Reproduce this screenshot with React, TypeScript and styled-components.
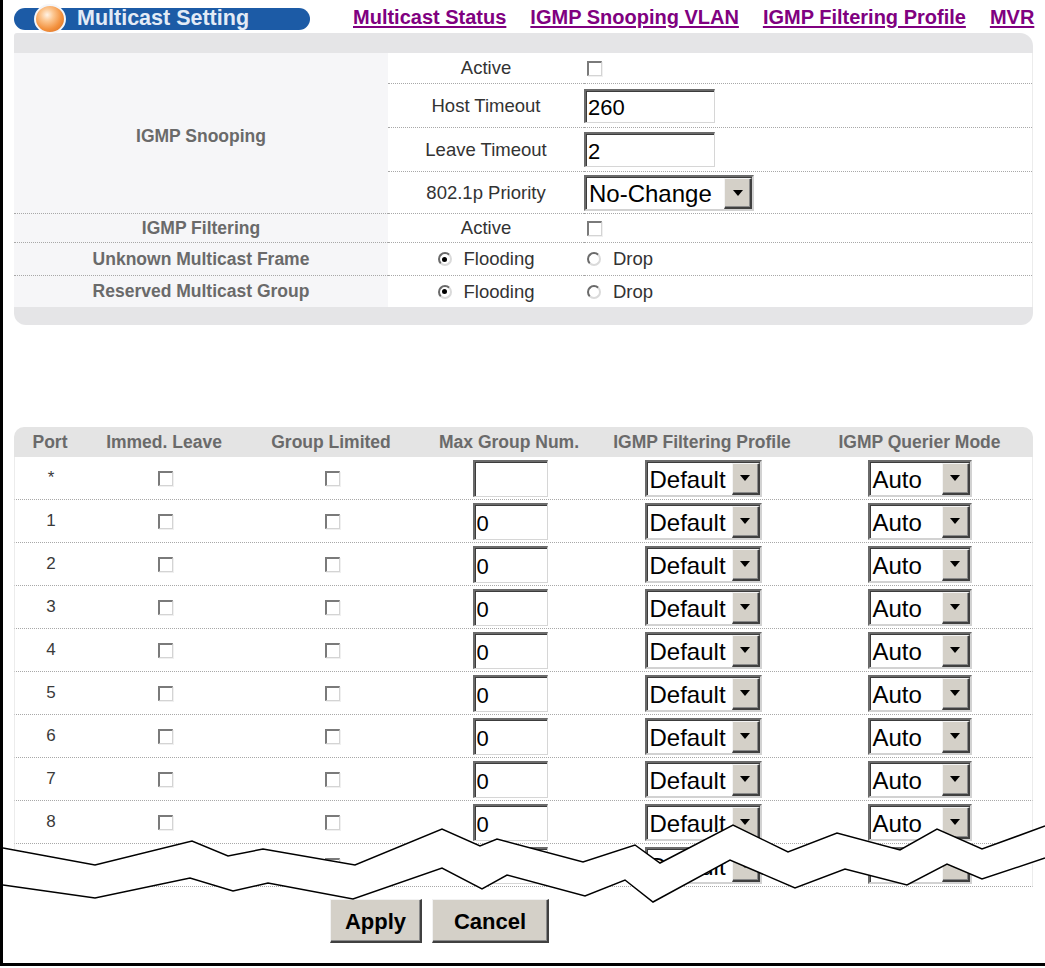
import React from "react";
import styled, { createGlobalStyle } from "styled-components";

const GlobalStyle = createGlobalStyle`
  *, *::before, *::after { box-sizing: border-box; }
  html, body { margin: 0; padding: 0; background: #ffffff; }
  body { font-family: "Liberation Sans", Arial, Helvetica, sans-serif; }
`;

const DOT = "#a8a8a8";
const BAND = "#e5e5e7";
const LABEL = "#6a6a6a";

const Frame = styled.div`
  position: relative;
  width: 1045px;
  height: 966px;
  border-left: 3px solid #000;
  border-bottom: 3px solid #000;
  padding: 8px 0 0 11px;
  overflow: hidden;
  background: #fff;
`;

const TopBar = styled.header`
  display: flex;
  align-items: center;
  height: 22px;
`;

const TitlePill = styled.div`
  display: flex;
  align-items: center;
  flex: none;
  width: 296px;
  height: 22px;
  border-radius: 11px;
  background: #1c5ba6;
  padding-left: 20px;
`;

const Orb = styled.span`
  flex: none;
  width: 32px;
  height: 30px;
  margin: -4px 0;
  border-radius: 50%;
  border: 2px solid #f4f6fa;
  background: radial-gradient(
    circle at 40% 34%,
    #fff3e6 0%,
    #fcc690 26%,
    #f3923f 60%,
    #d4661a 100%
  );
`;

const TitleText = styled.span`
  margin-left: 11px;
  padding-bottom: 2px;
  font-size: 21.5px;
  line-height: 20px;
  font-weight: bold;
  color: #e3ebf6;
  white-space: nowrap;
`;

const NavLinks = styled.nav`
  display: flex;
  gap: 24px;
  margin-left: 43px;
  align-self: flex-start;
  margin-top: -1px;
`;

const NavLink = styled.a`
  font-size: 20px;
  line-height: 20px;
  font-weight: bold;
  color: #800080;
  text-decoration: underline;
  text-underline-offset: 2px;
  white-space: nowrap;
  cursor: pointer;
`;

const Panel = styled.section`
  width: 1019px;
  margin-top: 3px;
`;

const BandTop = styled.div`
  height: 20px;
  background: ${BAND};
  border-radius: 3px 13px 0 0;
`;

const BandBottom = styled.div`
  height: 18px;
  background: ${BAND};
  border-radius: 0 0 12px 12px;
`;

const SettingsGrid = styled.div`
  display: grid;
  grid-template-columns: 374px 196px 1fr;
  grid-template-rows: 31px 44px 44px 42px 29px 33px 31px;
  border-right: 1px solid #ececec;
`;

const GroupLabel = styled.div<{ $span?: number; $last?: boolean }>`
  grid-row: span ${(p) => p.$span ?? 1};
  display: flex;
  align-items: center;
  justify-content: center;
  padding-top: ${(p) => ((p.$span ?? 1) > 1 ? 6 : 0)}px;
  background: #f6f6f8;
  font-size: 17.5px;
  font-weight: bold;
  color: ${LABEL};
  border-bottom: ${(p) => (p.$last ? "none" : `1px dotted ${DOT}`)};
`;

const FieldName = styled.div<{ $last?: boolean }>`
  display: flex;
  align-items: center;
  justify-content: center;
  gap: 12px;
  font-size: 18.5px;
  color: #333;
  border-bottom: ${(p) => (p.$last ? "none" : `1px dotted ${DOT}`)};
`;

const FieldValue = styled.div<{ $last?: boolean }>`
  display: flex;
  align-items: center;
  gap: 12px;
  font-size: 18.5px;
  color: #333;
  border-bottom: ${(p) => (p.$last ? "none" : `1px dotted ${DOT}`)};
`;

const Check = styled.span<{ $indent?: number }>`
  display: inline-block;
  flex: none;
  width: 15px;
  height: 15px;
  margin-left: ${(p) => p.$indent ?? 0}px;
  background: #fff;
  border-top: 2px solid #7a7a7a;
  border-left: 2px solid #7a7a7a;
  border-right: 1px solid #d4d4d4;
  border-bottom: 1px solid #d4d4d4;
  box-shadow: 1px 1px 0 #f0f0f0;
`;

const Radio = styled.span<{ $on?: boolean; $indent?: number }>`
  display: flex;
  align-items: center;
  justify-content: center;
  flex: none;
  width: 14px;
  height: 14px;
  margin-left: ${(p) => p.$indent ?? 0}px;
  border-radius: 50%;
  border: 2px solid;
  border-color: #6a6a6a #dadada #dadada #6a6a6a;
  background: #fff;
  &::after {
    content: "";
    display: ${(p) => (p.$on ? "block" : "none")};
    width: 5px;
    height: 5px;
    border-radius: 50%;
    background: #000;
  }
`;

const TextBox = styled.input<{ $w: number; $h: number; $indent?: number }>`
  width: ${(p) => p.$w}px;
  height: ${(p) => p.$h}px;
  margin: 0 0 0 ${(p) => p.$indent ?? 0}px;
  padding: 4px 0 0 2px;
  font-family: "Liberation Sans", Arial, sans-serif;
  font-size: 22px;
  color: #000;
  background: #fff;
  border-top: 2px solid #6a6a6a;
  border-left: 2px solid #6a6a6a;
  border-right: 1px solid #d6d6d6;
  border-bottom: 1px solid #d6d6d6;
  box-shadow: inset 1px 1px 0 #3c3c3c;
  outline: none;
`;

const SelectBox = styled.div<{ $w: number; $h: number; $indent?: number }>`
  display: flex;
  flex: none;
  width: ${(p) => p.$w}px;
  height: ${(p) => p.$h}px;
  margin-left: ${(p) => p.$indent ?? 0}px;
  background: #fff;
  border-top: 2px solid #6a6a6a;
  border-left: 2px solid #6a6a6a;
  border-right: 2px solid #d2d2d2;
  border-bottom: 2px solid #d2d2d2;
  box-shadow: inset 1px 1px 0 #3c3c3c;
`;

const SelectText = styled.span`
  flex: 1;
  display: flex;
  align-items: center;
  padding: 3px 0 0 3px;
  font-size: 24px;
  color: #000;
  white-space: nowrap;
  overflow: hidden;
`;

const SelectButton = styled.span`
  display: flex;
  align-items: center;
  justify-content: center;
  flex: none;
  width: 28px;
  margin: 1px 0 0 0;
  background: #d4d0c8;
  border-top: 1px solid #f4f4f4;
  border-left: 1px solid #f4f4f4;
  border-right: 2px solid #404040;
  border-bottom: 2px solid #404040;
  box-shadow: inset -1px -1px 0 #8a8a8a;
`;

const Caret = styled.span`
  width: 0;
  height: 0;
  border-left: 5px solid transparent;
  border-right: 5px solid transparent;
  border-top: 6px solid #000;
`;

const PortSection = styled.section`
  width: 1019px;
  margin-top: 102px;
`;

const COLS = "72px 156px 178px 178px 208px 1fr";

const HeadRow = styled.div`
  display: grid;
  grid-template-columns: ${COLS};
  align-items: center;
  justify-items: center;
  height: 30px;
  background: #e4e4e4;
  border-radius: 10px 10px 0 0;
  font-size: 17.5px;
  font-weight: bold;
  color: ${LABEL};
  white-space: nowrap;
`;

const PortRow = styled.div`
  display: grid;
  grid-template-columns: ${COLS};
  align-items: center;
  justify-items: center;
  height: 43px;
  border-left: 1px solid #ececec;
  border-right: 1px solid #ececec;
  border-bottom: 1px dotted ${DOT};
`;

const PortId = styled.span`
  font-size: 17px;
  color: #3a3a3a;
`;

const ButtonBar = styled.div`
  display: flex;
  gap: 10px;
  margin-top: 12px;
  padding-left: 316px;
`;

const Button = styled.button<{ $w: number }>`
  width: ${(p) => p.$w}px;
  height: 44px;
  padding: 2px 0 0 0;
  font-family: "Liberation Sans", Arial, sans-serif;
  font-size: 22px;
  font-weight: bold;
  color: #000;
  background: #d4d0c8;
  border-top: 1px solid #f2f2f2;
  border-left: 1px solid #f2f2f2;
  border-right: 2px solid #404040;
  border-bottom: 2px solid #404040;
  box-shadow: inset -1px -1px 0 #8a8a8a;
  cursor: pointer;
`;

const BreakMark = styled.svg`
  position: absolute;
  left: 0;
  top: 0;
  z-index: 2;
  pointer-events: none;
`;

const topLine: [number, number][] = [
  [3, 848], [95, 865], [192, 841], [228, 856], [263, 849], [355, 865],
  [442, 829], [480, 846], [497, 839], [583, 862], [635, 845], [660, 863],
  [733, 825], [788, 852], [837, 833], [900, 850], [937, 829], [982, 849],
  [1045, 826],
];
const bottomLine: [number, number][] = [
  [3, 885], [95, 898], [190, 878], [233, 891], [268, 883], [353, 899],
  [442, 868], [482, 889], [507, 875], [585, 896], [625, 880], [653, 902],
  [730, 860], [795, 888], [845, 869], [907, 885], [947, 864], [982, 879],
  [1045, 858],
];
const pts = (a: [number, number][]) => a.map(([x, y]) => `${x},${y}`).join(" ");

function Select({ w, h, value, indent }: { w: number; h: number; value: string; indent?: number }) {
  return (
    <SelectBox $w={w} $h={h} $indent={indent}>
      <SelectText>{value}</SelectText>
      <SelectButton>
        <Caret />
      </SelectButton>
    </SelectBox>
  );
}

const ports = ["*", "1", "2", "3", "4", "5", "6", "7", "8", "9"];

export default function App() {
  return (
    <>
      <GlobalStyle />
      <Frame>
        <TopBar>
          <TitlePill>
            <Orb />
            <TitleText>Multicast Setting</TitleText>
          </TitlePill>
          <NavLinks>
            <NavLink>Multicast Status</NavLink>
            <NavLink>IGMP Snooping VLAN</NavLink>
            <NavLink>IGMP Filtering Profile</NavLink>
            <NavLink>MVR</NavLink>
          </NavLinks>
        </TopBar>

        <Panel>
          <BandTop />
          <SettingsGrid>
            <GroupLabel $span={4}>IGMP Snooping</GroupLabel>
            <FieldName>Active</FieldName>
            <FieldValue>
              <Check $indent={3} />
            </FieldValue>
            <FieldName>Host Timeout</FieldName>
            <FieldValue>
              <TextBox $w={131} $h={34} defaultValue="260" readOnly />
            </FieldValue>
            <FieldName>Leave Timeout</FieldName>
            <FieldValue>
              <TextBox $w={131} $h={35} defaultValue="2" readOnly />
            </FieldValue>
            <FieldName>802.1p Priority</FieldName>
            <FieldValue>
              <Select w={170} h={36} value="No-Change" />
            </FieldValue>

            <GroupLabel>IGMP Filtering</GroupLabel>
            <FieldName>Active</FieldName>
            <FieldValue>
              <Check $indent={3} />
            </FieldValue>

            <GroupLabel>Unknown Multicast Frame</GroupLabel>
            <FieldName>
              <Radio $on />
              Flooding
            </FieldName>
            <FieldValue>
              <Radio $indent={3} />
              Drop
            </FieldValue>

            <GroupLabel $last>Reserved Multicast Group</GroupLabel>
            <FieldName $last>
              <Radio $on />
              Flooding
            </FieldName>
            <FieldValue $last>
              <Radio $indent={3} />
              Drop
            </FieldValue>
          </SettingsGrid>
          <BandBottom />
        </Panel>

        <PortSection>
          <HeadRow>
            <span>Port</span>
            <span>Immed. Leave</span>
            <span>Group Limited</span>
            <span>Max Group Num.</span>
            <span>IGMP Filtering Profile</span>
            <span>IGMP Querier Mode</span>
          </HeadRow>
          {ports.map((p) => (
            <PortRow key={p}>
              <PortId>{p}</PortId>
              <Check />
              <Check />
              <TextBox $w={75} $h={37} defaultValue={p === "*" ? "" : "0"} readOnly />
              <Select w={117} h={37} value="Default" />
              <Select w={104} h={37} value="Auto" />
            </PortRow>
          ))}
        </PortSection>

        <ButtonBar>
          <Button $w={92}>Apply</Button>
          <Button $w={117}>Cancel</Button>
        </ButtonBar>

        <BreakMark width={1042} height={963} viewBox="3 0 1042 963">
          <polygon points={`${pts(topLine)} ${pts([...bottomLine].reverse())}`} fill="#fff" />
          <polyline points={pts(topLine)} fill="none" stroke="#000" strokeWidth={1.5} />
          <polyline points={pts(bottomLine)} fill="none" stroke="#000" strokeWidth={1.5} />
        </BreakMark>
      </Frame>
    </>
  );
}
